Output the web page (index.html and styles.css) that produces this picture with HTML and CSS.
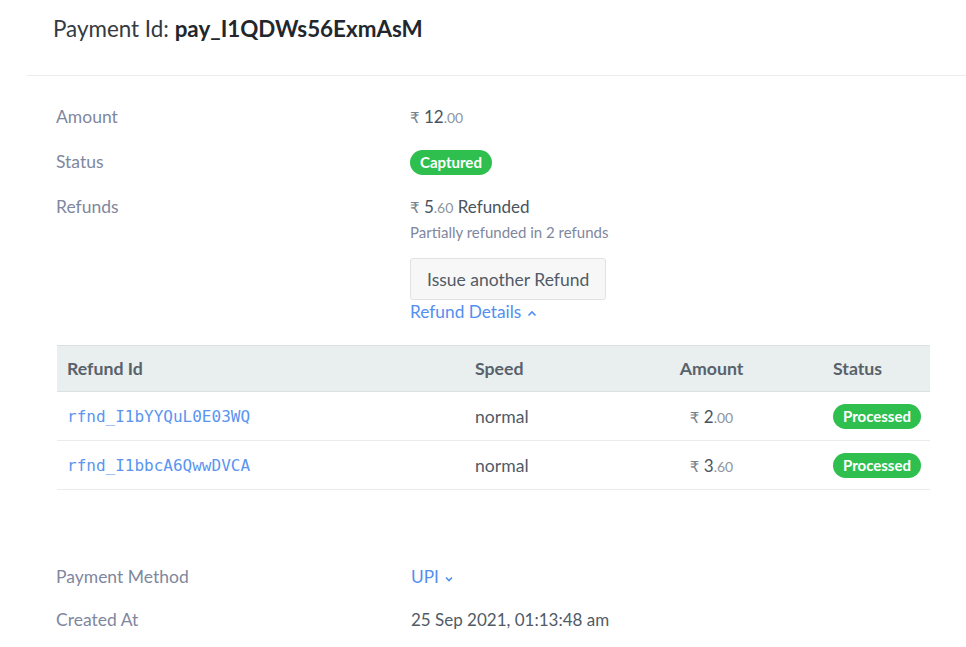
FILE: index.html
```html
<!DOCTYPE html>
<html>
<head>
<meta charset="utf-8">
<link rel="stylesheet" href="styles.css">
</head>
<body>
<div class="page">
  <div class="header">
    <h1 class="title">Payment Id: <b>pay_I1QDWs56ExmAsM</b></h1>
  </div>
  <div class="details">
    <div class="row">
      <div class="label">Amount</div>
      <div class="value"><span class="cur">₹</span> <span class="major">12</span><span class="minor">.00</span></div>
    </div>
    <div class="row">
      <div class="label">Status</div>
      <div class="value status-val"><span class="badge">Captured</span></div>
    </div>
    <div class="row row-refunds">
      <div class="label">Refunds</div>
      <div class="value">
        <div class="line"><span class="cur">₹</span> <span class="major">5</span><span class="minor">.60</span> <span class="major">Refunded</span></div>
        <div class="sub">Partially refunded in 2 refunds</div>
        <button class="btn">Issue another Refund</button>
        <div class="link">Refund Details <svg class="chev" width="10" height="8" viewBox="0 0 10 8"><path d="M1.5 5.5 L5 2 L8.5 5.5" fill="none" stroke="currentColor" stroke-width="1.6"/></svg></div>
      </div>
    </div>
    <table class="refunds">
      <colgroup><col class="c1"><col class="c2"><col class="c3"><col class="c4"></colgroup>
      <thead>
        <tr><th>Refund Id</th><th>Speed</th><th class="center">Amount</th><th>Status</th></tr>
      </thead>
      <tbody>
        <tr>
          <td class="mono">rfnd_I1bYYQuL0E03WQ</td>
          <td>normal</td>
          <td class="center"><span class="cur">₹</span> <span class="major">2</span><span class="minor">.00</span></td>
          <td><span class="badge">Processed</span></td>
        </tr>
        <tr>
          <td class="mono">rfnd_I1bbcA6QwwDVCA</td>
          <td>normal</td>
          <td class="center"><span class="cur">₹</span> <span class="major">3</span><span class="minor">.60</span></td>
          <td><span class="badge">Processed</span></td>
        </tr>
      </tbody>
    </table>
    <div class="row row-method">
      <div class="label">Payment Method</div>
      <div class="value link upi">UPI <svg class="chev" width="10" height="8" viewBox="0 0 10 8"><path d="M2 2.5 L5 5.5 L8 2.5" fill="none" stroke="currentColor" stroke-width="1.6"/></svg></div>
    </div>
    <div class="row">
      <div class="label">Created At</div>
      <div class="value created">25 Sep 2021, 01:13:48 am</div>
    </div>
  </div>
</div>
</body>
</html>
```
FILE: styles.css
```css
* { box-sizing: border-box; }
html, body { margin: 0; padding: 0; background: #fff; }
body {
  font-family: Lato, "Noto Sans", "DejaVu Sans", sans-serif;
  color: #515b66;
  font-size: 17px;
}
.page { width: 966px; }
.header {
  margin-left: 27px;
  height: 76px;
  border-bottom: 1px solid #ececec;
  padding: 13px 0 0 26px;
}
.title {
  margin: 0;
  font-size: 22.4px;
  font-weight: 400;
  color: #333a42;
  line-height: 32px;
}
.title b { font-weight: 700; color: #22272d; }
.details { padding: 29px 0 0 56px; }
.row {
  display: grid;
  grid-template-columns: 354px auto;
  line-height: 24px;
  margin-bottom: 21px;
}
.label { color: #7f879e; font-size: 17.5px; height: 24px; }
.value { color: #515b66; font-size: 17px; }
.row > .value { min-height: 24px; }
.line { height: 24px; }
.status-val {
  display: flex;
  align-items: center;
  height: 24px;
}
.cur { font-family: "DejaVu Sans", sans-serif; font-size: 15px; color: #7a838c; line-height: 1; }
.major { color: #4a545e; font-size: 17px; line-height: 1; }
.minor { color: #8d959e; font-size: 14px; line-height: 1; }
.badge {
  display: inline-block;
  flex: none;
  background: #2ebf4f;
  color: #fff;
  font-weight: 700;
  font-size: 15px;
  line-height: 25px;
  height: 25px;
  padding: 0 10px;
  border-radius: 13px;
}
.sub { font-size: 15px; color: #7f879e; line-height: 20px; margin-top: 3px; }
.btn {
  display: block;
  margin-top: 16px;
  height: 42px;
  padding: 0 16px;
  font-family: inherit;
  font-size: 17.5px;
  color: #515b66;
  background: #f7f7f7;
  border: 1px solid #dfe3e6;
  border-radius: 3px;
}
.link { color: #528ff0; font-size: 17.3px; line-height: 24px; }
.chev { vertical-align: middle; margin-left: 1px; }
.row-refunds { margin-bottom: 21px; }
.refunds {
  width: 873px;
  margin-left: 1px;
  border-collapse: collapse;
  table-layout: fixed;
  margin-bottom: 75px;
}
.c1 { width: 408px; }
.c2 { width: 135px; }
.c3 { width: 223px; }
.c4 { width: 107px; }
.refunds th {
  background: #e9eeee;
  height: 46px;
  border-top: 1px solid #dbe0e0;
  border-bottom: 1px solid #dbe0e0;
  text-align: left;
  font-weight: 700;
  font-size: 17.7px;
  color: #58626b;
  padding: 0 10px;
}
.refunds td {
  height: 49px;
  border-bottom: 1px solid #e8ecec;
  padding: 0 10px;
  font-size: 17.6px;
  color: #515b66;
}
.refunds td .badge { vertical-align: middle; }
.refunds .center { text-align: center; }
.refunds td.mono {
  font-family: "DejaVu Sans Mono", monospace;
  font-size: 16px;
  color: #5a95f0;
}
.upi, .created { padding-left: 1px; }
.row-method { margin-bottom: 19px; }
```
